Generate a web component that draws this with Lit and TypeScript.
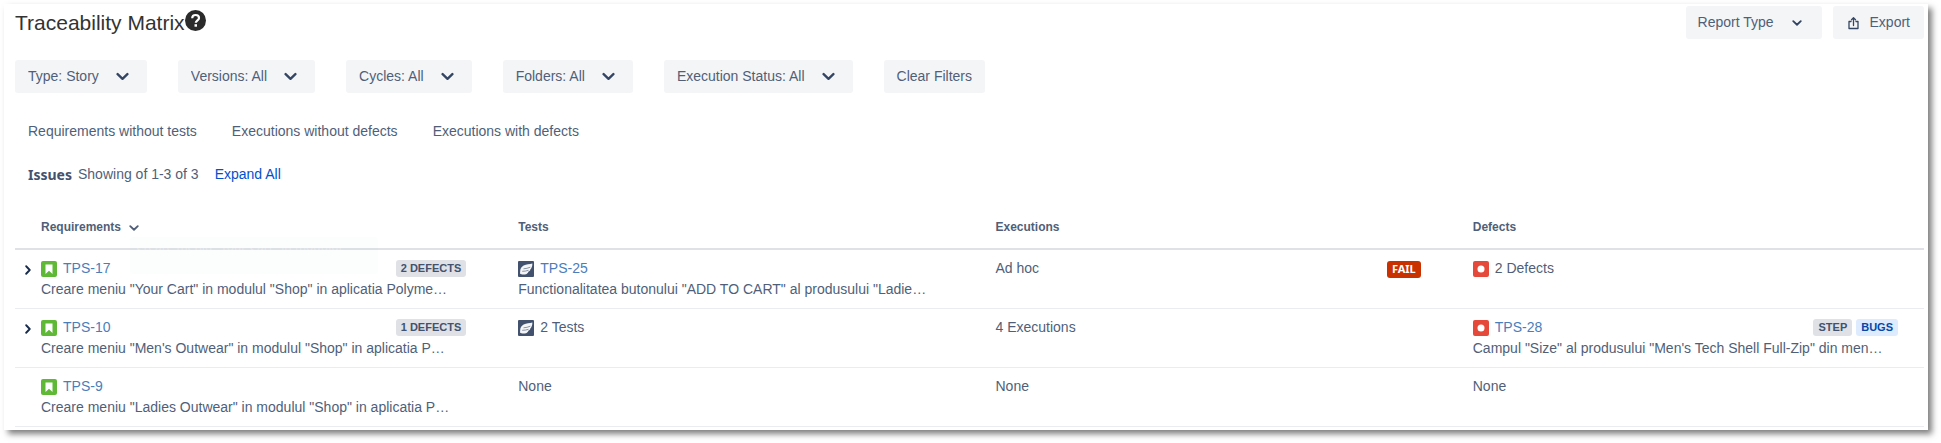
import { LitElement, html, svg, css, nothing } from "lit";
import { customElement, property, state } from "lit/decorators.js";

type IconName = "story" | "test" | "bug";

interface Lozenge {
  text: string;
  tone: "neutral" | "blue" | "red";
}

interface Cell {
  icon?: IconName;
  key?: string;
  text?: string;
  summary?: string;
  lozenges?: Lozenge[];
}

interface Row {
  expandable: boolean;
  cells: Cell[];
}

const FILTERS = [
  { name: "Type", value: "Story" },
  { name: "Versions", value: "All" },
  { name: "Cycles", value: "All" },
  { name: "Folders", value: "All" },
  { name: "Execution Status", value: "All" },
];

const QUICK_FILTERS = [
  "Requirements without tests",
  "Executions without defects",
  "Executions with defects",
];

const ROWS: Row[] = [
  {
    expandable: true,
    cells: [
      {
        icon: "story",
        key: "TPS-17",
        summary: 'Creare meniu "Your Cart" in modulul "Shop" in aplicatia Polyme…',
        lozenges: [{ text: "2 DEFECTS", tone: "neutral" }],
      },
      {
        icon: "test",
        key: "TPS-25",
        summary: 'Functionalitatea butonului "ADD TO CART" al produsului "Ladie…',
      },
      { text: "Ad hoc", lozenges: [{ text: "FAIL", tone: "red" }] },
      { icon: "bug", text: "2 Defects" },
    ],
  },
  {
    expandable: true,
    cells: [
      {
        icon: "story",
        key: "TPS-10",
        summary: 'Creare meniu "Men\'s Outwear" in modulul "Shop" in aplicatia P…',
        lozenges: [{ text: "1 DEFECTS", tone: "neutral" }],
      },
      { icon: "test", text: "2 Tests" },
      { text: "4 Executions" },
      {
        icon: "bug",
        key: "TPS-28",
        summary: 'Campul "Size" al produsului "Men\'s Tech Shell Full-Zip" din men…',
        lozenges: [
          { text: "STEP", tone: "neutral" },
          { text: "BUGS", tone: "blue" },
        ],
      },
    ],
  },
  {
    expandable: false,
    cells: [
      {
        icon: "story",
        key: "TPS-9",
        summary: 'Creare meniu "Ladies Outwear" in modulul "Shop" in aplicatia P…',
      },
      { text: "None" },
      { text: "None" },
      { text: "None" },
    ],
  },
];

const ICONS = {
  story: svg`<rect width="16" height="16" rx="2" fill="#5fb936"/><path d="M4.500 3.500h7v9.500L8 9.800 4.500 13z" fill="#fff"/>`,
  test: svg`<rect width="16" height="16" rx="1" fill="#42526e"/><path d="M14.400 2.400C11.500 3.600 8.500 2.800 5.600 4.400 3.200 5.800 2.200 8 2.200 10l-.2 2.400c1.200 1.300 4.200 1.500 6.600.5 1.300-.6 1.700-1.400 1.700-2.100 1.400-.5 2-1.400 2-2.300 1.300-1.200 2.100-3.500 2.100-6.100z" fill="#f4f5f7"/><path d="M5.500 7.800c2.500-.2 4.500-.6 6.800-1.600M4.200 10.300c2.300 0 4.300-.3 6.300-1" stroke="#42526e" stroke-width=".6" fill="none"/>`,
  bug: svg`<rect width="16" height="16" rx="2" fill="#e5493a"/><circle cx="8" cy="8" r="3.500" fill="#fff"/>`,
};

const chevron = (size: number) => html`
  <svg class="chevron" width=${size} height=${size} viewBox="0 0 12 12" aria-hidden="true">
    <path d="M1.500 3.800 6 8.100l4.500-4.300" fill="none" stroke="currentColor" stroke-width="2.200" stroke-linecap="round" stroke-linejoin="round" />
  </svg>`;

const shared = css`
  * {
    box-sizing: border-box;
  }
  button,
  select {
    margin: 0;
    border: 0;
    font: inherit;
    color: inherit;
    background: none;
    cursor: pointer;
  }
  a {
    text-decoration: none;
  }
  svg {
    display: block;
    flex: none;
  }
`;

@customElement("trace-filter")
class TraceFilter extends LitElement {
  @property() name = "";
  @property() value = "";

  static styles = [
    shared,
    css`
      :host {
        display: block;
      }
      .field {
        display: grid;
        align-items: center;
        border-radius: 3px;
        background: #f4f5f7;
      }
      .select,
      .chevron {
        grid-area: 1 / 1;
      }
      .select {
        appearance: none;
        field-sizing: content;
        height: 33px;
        padding: 0 48px 0 13px;
      }
      .chevron {
        justify-self: end;
        margin-right: 18px;
        color: #344563;
        pointer-events: none;
      }
    `,
  ];

  render() {
    return html`
      <label class="field">
        <select class="select" aria-label=${this.name}>
          <option>${this.name}: ${this.value}</option>
        </select>
        ${chevron(13)}
      </label>
    `;
  }
}

@customElement("trace-cell")
class TraceCell extends LitElement {
  @property({ attribute: false }) cell: Cell = {};

  static styles = [
    shared,
    css`
      :host {
        display: block;
        min-width: 0;
      }
      .line {
        display: flex;
        align-items: center;
        gap: 6px;
        height: 21px;
      }
      .lozenges {
        display: flex;
        gap: 4px;
        margin-left: auto;
      }
      .lozenge {
        height: 17px;
        padding: 0 5px;
        border-radius: 3px;
        font-size: 11px;
        font-weight: 700;
        line-height: 16px;
      }
      .neutral {
        background: #dfe1e6;
        color: #42526e;
      }
      .blue {
        background: #deebff;
        color: #0747a6;
      }
      .red {
        margin-top: 2px;
        background: #ca3100;
        color: #fff;
        font-family: "Noto Sans", sans-serif;
      }
      .key {
        color: #4a7ebb;
      }
      .summary {
        overflow: hidden;
        line-height: 21px;
        white-space: nowrap;
        text-overflow: ellipsis;
      }
    `,
  ];

  render() {
    const { icon, key, text, summary, lozenges } = this.cell;
    return html`
      <div class="line">
        ${icon
          ? html`<svg width="16" height="16" viewBox="0 0 16 16" aria-hidden="true">${ICONS[icon]}</svg>`
          : nothing}
        ${key ? html`<a class="key" href="#${key}">${key}</a>` : html`<span>${text}</span>`}
        ${lozenges
          ? html`<span class="lozenges">
              ${lozenges.map((l) => html`<span class="lozenge ${l.tone}">${l.text}</span>`)}
            </span>`
          : nothing}
      </div>
      ${summary ? html`<div class="summary">${summary}</div>` : nothing}
    `;
  }
}

@customElement("app-root")
class AppRoot extends LitElement {
  @state() private open = new Set<number>();

  static styles = [
    shared,
    css`
      :host {
        display: block;
        padding: 4px 13px 13px 4px;
        background: #fff;
        color: #505f79;
        font: 14px/21px "Liberation Sans", Arial, sans-serif;
      }
      .panel {
        padding: 2px 4px 3px 11px;
        background: #fff;
        box-shadow: 4px 4px 6px rgba(0, 0, 0, 0.5);
      }
      .header {
        display: flex;
        align-items: flex-start;
        justify-content: space-between;
      }
      .heading {
        display: flex;
        align-items: flex-start;
        padding-top: 4px;
      }
      .title {
        margin: 0;
        color: #333;
        font-size: 21px;
        font-weight: 400;
        line-height: 25px;
      }
      .actions {
        display: flex;
        gap: 11px;
      }
      .action {
        display: flex;
        align-items: center;
        height: 33px;
        padding: 0 13px;
        border-radius: 3px;
        background: #f4f5f7;
      }
      .report {
        gap: 18px;
        padding: 0 20px 0 12px;
      }
      .export {
        gap: 10px;
        padding: 0 14px;
      }
      .action svg {
        color: #344563;
      }
      .filters {
        display: flex;
        flex-wrap: wrap;
        gap: 31px;
        margin-top: 21px;
      }
      .quick {
        display: flex;
        flex-wrap: wrap;
        gap: 35px;
        margin-top: 28px;
        padding-left: 13px;
      }
      .quick-filter {
        padding: 0;
      }
      .counts {
        display: flex;
        gap: 6px;
        margin-top: 22px;
        padding-left: 13px;
      }
      .issues {
        color: #42526e;
        font: 700 14px/21px "Noto Sans", sans-serif;
      }
      .expand-all {
        margin-left: 10px;
        padding: 0;
        color: #0052cc;
      }
      .table {
        width: 100%;
        margin-top: 20px;
        border-collapse: collapse;
        table-layout: fixed;
      }
      .table th {
        position: relative;
        height: 44px;
        padding: 2px 26px 0;
        border-bottom: 2px solid #dfe1e6;
        font-size: 12px;
        text-align: left;
      }
      .table td {
        height: 59px;
        padding: 8px 26px;
        border-bottom: 1px solid #ebecf0;
        vertical-align: top;
      }
      .table td.first {
        padding-left: 0;
      }
      .sort {
        display: flex;
        align-items: center;
        gap: 8px;
        padding: 0;
      }
      .tooltip {
        position: absolute;
        top: 32px;
        left: 115px;
        width: 248px;
        padding: 1px 6px 0;
        border-radius: 3px;
        background: rgba(0, 80, 50, 0.012);
        color: rgba(255, 255, 255, 0.3);
        font: 12px/18px "Noto Sans", sans-serif;
        pointer-events: none;
      }
      .entry {
        display: grid;
        grid-template-columns: 26px 1fr;
      }
      .toggle {
        display: grid;
        place-items: center;
        width: 26px;
        height: 24px;
        padding: 0;
        color: #172b4d;
      }
      .toggle svg {
        transform: rotate(-90deg);
      }
      .toggle.opened svg {
        transform: none;
      }
    `,
  ];

  private toggle(index: number) {
    const next = new Set(this.open);
    next.has(index) ? next.delete(index) : next.add(index);
    this.open = next;
  }

  private renderRow(row: Row, index: number) {
    const [first, ...rest] = row.cells;
    const opened = this.open.has(index);
    return html`
      <tr>
        <td class="first">
          <div class="entry">
            ${row.expandable
              ? html`<button
                  class="toggle ${opened ? "opened" : ""}"
                  aria-label="Expand ${first.key}"
                  aria-expanded=${opened}
                  @click=${() => this.toggle(index)}
                >
                  ${chevron(10)}
                </button>`
              : html`<span></span>`}
            <trace-cell .cell=${first}></trace-cell>
          </div>
        </td>
        ${rest.map((cell) => html`<td><trace-cell .cell=${cell}></trace-cell></td>`)}
      </tr>
    `;
  }

  render() {
    return html`
      <main class="panel">
        <header class="header">
          <div class="heading">
            <h1 class="title">Traceability Matrix</h1>
            <svg width="21" height="21" viewBox="0 0 21 21" role="img" aria-label="Help">
              <circle cx="10.500" cy="10.500" r="10.500" fill="#2b2b2b" />
              <path d="M7.200 8.200c0-2 1.400-3.200 3.400-3.200s3.400 1.200 3.400 2.900c0 2.300-3.200 2.500-3.200 4.900" fill="none" stroke="#fff" stroke-width="2.200" />
              <rect x="9.500" y="14.200" width="2.500" height="2.500" fill="#fff" />
            </svg>
          </div>
          <div class="actions">
            <button class="action report" aria-haspopup="menu">Report Type ${chevron(10)}</button>
            <button class="action export">
              <svg width="13" height="14" viewBox="0 0 13 14" aria-hidden="true">
                <path d="M4 5.500H2v7h9v-7H9M6.500 9.500V2M4.500 3.800l2-2 2 2" fill="none" stroke="currentColor" stroke-width="1.300" stroke-linecap="round" stroke-linejoin="round" />
              </svg>
              Export
            </button>
          </div>
        </header>

        <div class="filters">
          ${FILTERS.map((f) => html`<trace-filter .name=${f.name} .value=${f.value}></trace-filter>`)}
          <button class="action">Clear Filters</button>
        </div>

        <nav class="quick">
          ${QUICK_FILTERS.map((label) => html`<button class="quick-filter">${label}</button>`)}
        </nav>

        <div class="counts">
          <strong class="issues">Issues</strong>
          <span>Showing of 1-3 of 3</span>
          <button class="expand-all">Expand All</button>
        </div>

        <table class="table">
          <thead>
            <tr>
              <th>
                <button class="sort">Requirements ${chevron(10)}</button>
                <div class="tooltip" role="tooltip">
                  Creare meniu "Your Cart" in modulul<br />"Shop" in aplicatia Polymer Shop
                </div>
              </th>
              <th>Tests</th>
              <th>Executions</th>
              <th>Defects</th>
            </tr>
          </thead>
          <tbody>
            ${ROWS.map((row, index) => this.renderRow(row, index))}
          </tbody>
        </table>
      </main>
    `;
  }
}
